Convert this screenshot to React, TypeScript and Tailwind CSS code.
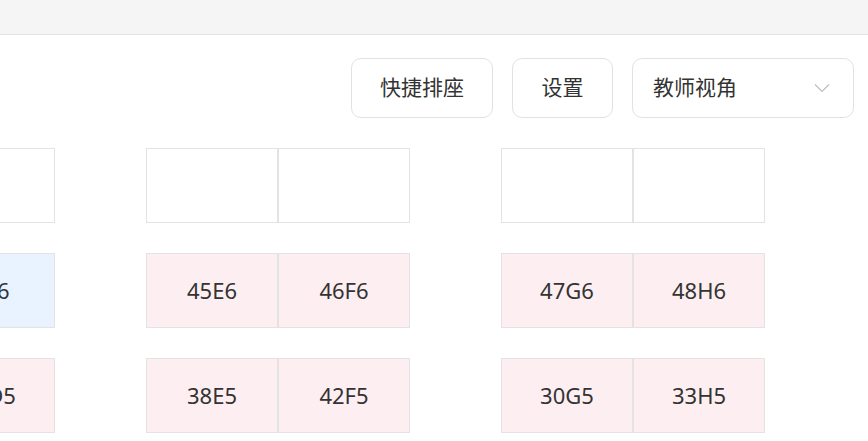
import React from "react";

type Seat = { label: string; tone: "empty" | "pink" | "blue" };

const groups: Seat[][][] = [
  [
    [{ label: "", tone: "empty" }, { label: "", tone: "empty" }],
    [{ label: "9D6", tone: "blue" }, { label: "9D6", tone: "blue" }],
    [{ label: "41D5", tone: "pink" }, { label: "41D5", tone: "pink" }],
  ],
  [
    [{ label: "", tone: "empty" }, { label: "", tone: "empty" }],
    [{ label: "45E6", tone: "pink" }, { label: "46F6", tone: "pink" }],
    [{ label: "38E5", tone: "pink" }, { label: "42F5", tone: "pink" }],
  ],
  [
    [{ label: "", tone: "empty" }, { label: "", tone: "empty" }],
    [{ label: "47G6", tone: "pink" }, { label: "48H6", tone: "pink" }],
    [{ label: "30G5", tone: "pink" }, { label: "33H5", tone: "pink" }],
  ],
];

function SeatCell({ seat }: { seat: Seat }) {
  const bg =
    seat.tone === "pink"
      ? "bg-[#fdeff1]"
      : seat.tone === "blue"
      ? "bg-[#e8f3ff]"
      : "bg-white";
  return (
    <div
      className={`w-[132px] h-[75px] border border-[#e3e3e3] flex items-center justify-center text-[22px] text-[#333333] ${bg}`}
    >
      {seat.label}
    </div>
  );
}

export default function App() {
  return (
    <div className="w-[868px] h-[441px] overflow-hidden bg-white font-['Noto_Sans','Noto_Sans_CJK_SC',sans-serif] text-[#333333]">
      <div className="h-[35px] bg-[#f5f5f5] border-b border-[#e4e4e4]" />
      <div className="flex justify-end gap-[19px] pt-[23px] pr-[14px]">
        <button className="h-[60px] w-[142px] rounded-[10px] border border-[#e2e2e2] bg-white text-[21px] text-[#333333] flex items-center justify-center">
          快捷排座
        </button>
        <button className="h-[60px] w-[101px] rounded-[10px] border border-[#e2e2e2] bg-white text-[21px] text-[#333333] flex items-center justify-center">
          设置
        </button>
        <div className="h-[60px] w-[222px] rounded-[10px] border border-[#e2e2e2] bg-white flex items-center justify-between pl-[20px] pr-[23px]">
          <span className="text-[21px] text-[#333333]">教师视角</span>
          <svg width="16" height="10" viewBox="0 0 16 10" fill="none">
            <polyline
              points="1,1.5 8,8.5 15,1.5"
              stroke="#bdbdbd"
              strokeWidth="1.2"
              fill="none"
            />
          </svg>
        </div>
      </div>
      <div className="mt-[30px] flex gap-[91px] ml-[-209px]">
        {groups.map((g, gi) => (
          <div key={gi} className="flex flex-col gap-[30px] shrink-0">
            {g.map((row, ri) => (
              <div key={ri} className="flex">
                {row.map((s, si) => (
                  <SeatCell key={si} seat={s} />
                ))}
              </div>
            ))}
          </div>
        ))}
      </div>
    </div>
  );
}
